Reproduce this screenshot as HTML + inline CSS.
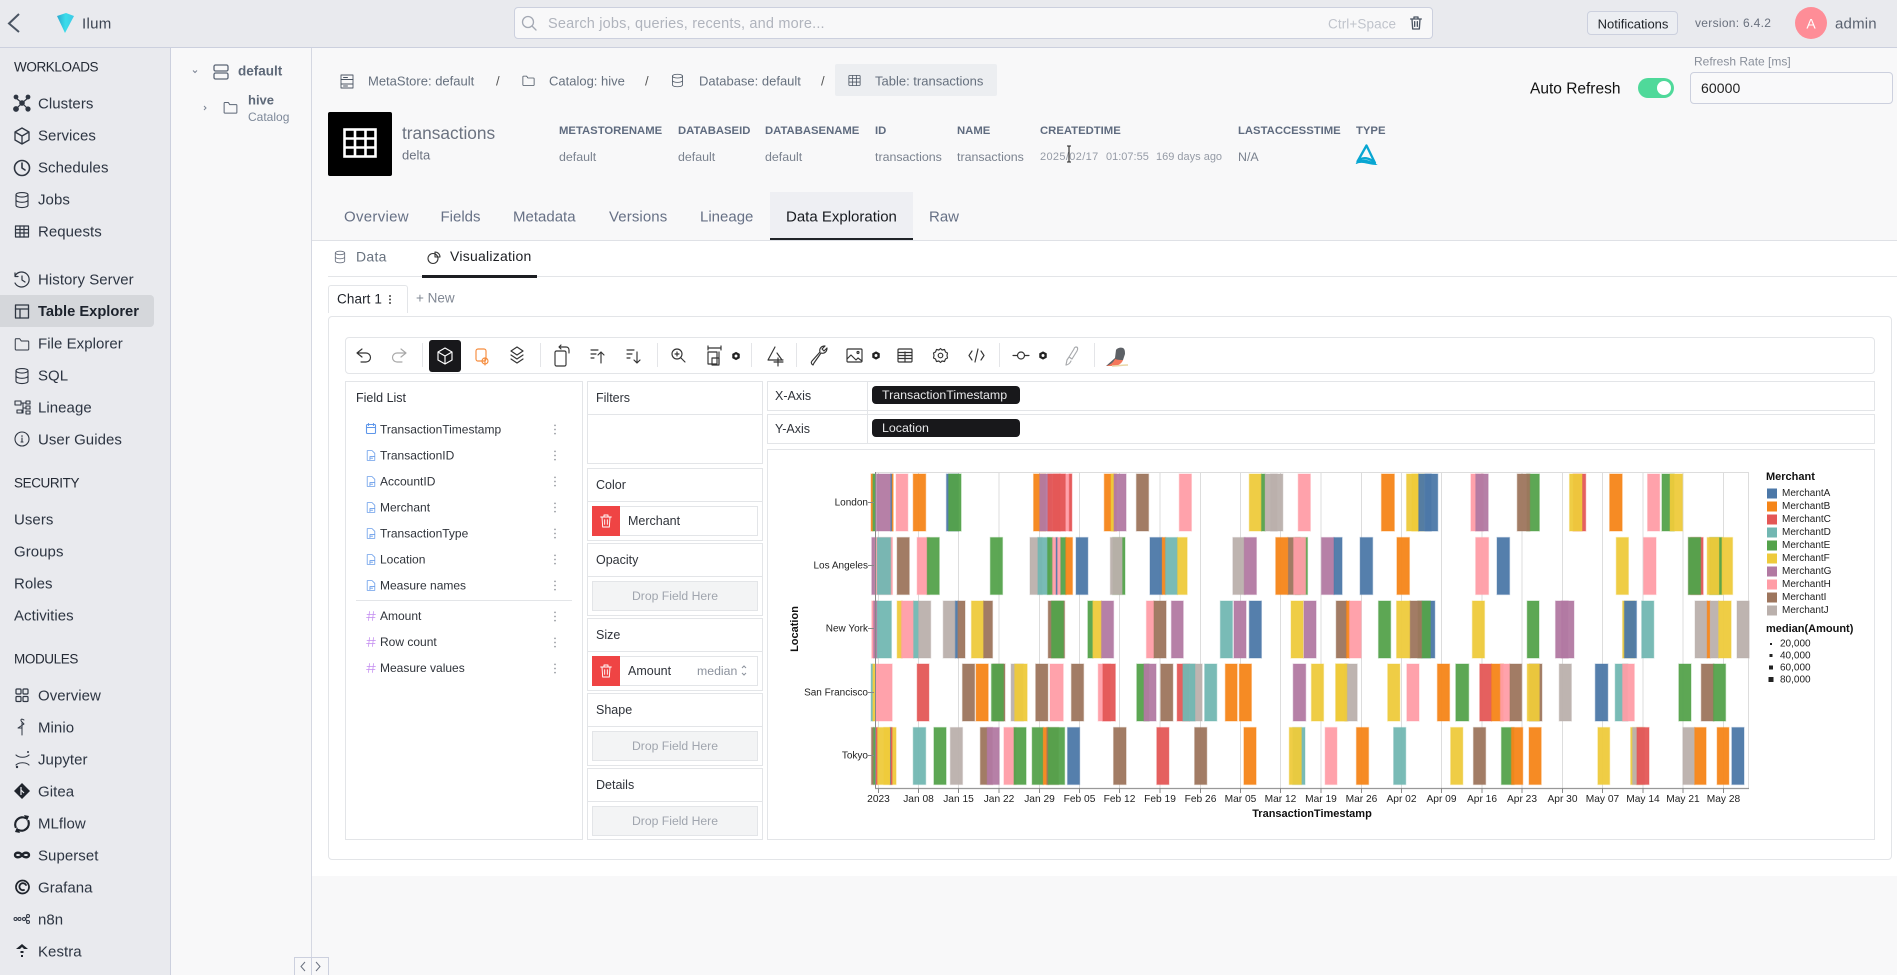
<!DOCTYPE html>
<html><head><meta charset="utf-8"><title>Ilum</title>
<style>
html,body{margin:0;padding:0;width:1897px;height:975px;overflow:hidden;background:#f8f8f9;font-family:"Liberation Sans",sans-serif}
.b{position:absolute;box-sizing:border-box}
.w{background:#fff;border:1px solid #e3e5e8}
.d{background:#f3f4f5;border:1px solid #e3e5e8}
svg.o{position:absolute;left:0;top:0}
text{dominant-baseline:central;white-space:pre}
.i{fill:none;stroke:#2f3642;stroke-width:2;stroke-linecap:round;stroke-linejoin:round}
.A{fill:#4c78a8;stroke:#4c78a8}.B{fill:#f58518;stroke:#f58518}.C{fill:#e45756;stroke:#e45756}.D{fill:#72b7b2;stroke:#72b7b2}.E{fill:#54a24b;stroke:#54a24b}.F{fill:#eeca3b;stroke:#eeca3b}.G{fill:#b279a2;stroke:#b279a2}.H{fill:#ff9da6;stroke:#ff9da6}.I{fill:#9d755d;stroke:#9d755d}.J{fill:#bab0ac;stroke:#bab0ac}
.bars rect{vector-effect:non-scaling-stroke;stroke-width:1.2;stroke-opacity:.35;fill-opacity:.95}
.r1 rect{y:474px;height:57px}.r2 rect{y:537.5px;height:57px}.r3 rect{y:601px;height:57px}.r4 rect{y:664px;height:57px}.r5 rect{y:727.5px;height:57px}
.lg rect{stroke:none}
</style></head><body>
<div class="b" style="left:0;top:0;width:1897px;height:48px;background:#e9eaee;border-bottom:1px solid #ccd0de"></div>
<div class="b" style="left:0;top:48px;width:171px;height:927px;background:#e9eaee;border-right:1px solid #ccd0de"></div>
<div class="b" style="left:171px;top:48px;width:141px;height:927px;background:#f8f8f9;border-right:1px solid #d5d8e2"></div>
<div class="b" style="left:312px;top:240px;width:1585px;height:636px;background:#fff;border-top:1px solid #dfe1e6"></div>
<div class="b" style="left:0;top:295px;width:154px;height:32px;background:#d5d7db;border-radius:0 4px 4px 0"></div>
<div class="b" style="left:514px;top:7px;width:919px;height:32px;background:#f8f8f9;border:1px solid #ccd0de;border-radius:4px"></div>
<div class="b" style="left:1587px;top:11px;width:91px;height:24px;background:#eceef2;border:1px solid #ccd0de;border-radius:4px"></div>
<div class="b" style="left:1795px;top:7px;width:32px;height:32px;background:#fe8d97;border-radius:50%"></div>
<div class="b" style="left:1638px;top:78px;width:36px;height:20px;background:#4fd99a;border-radius:10px"></div>
<div class="b" style="left:1657px;top:81px;width:14px;height:14px;background:#fff;border-radius:50%"></div>
<div class="b" style="left:1690px;top:72px;width:203px;height:32px;background:#f9f9fa;border:1px solid #ccd0de;border-radius:4px"></div>
<div class="b" style="left:835px;top:64px;width:162px;height:32px;background:#eceef1;border-radius:2px"></div>
<div class="b" style="left:328px;top:112px;width:64px;height:64px;background:#000;border-radius:2px"></div>
<div class="b" style="left:770px;top:192px;width:143px;height:48px;background:#eeeff3;border-bottom:2px solid #1f2328"></div>
<div class="b" style="left:328px;top:276px;width:1569px;height:1px;background:#e3e5e8"></div>
<div class="b" style="left:422px;top:275px;width:115px;height:3px;background:#1c1e22"></div>
<div class="b" style="left:328px;top:285px;width:80px;height:28px;background:#fff;border:1px solid #e3e5e8;border-bottom:none;border-radius:3px 3px 0 0"></div>
<div class="b w" style="left:328px;top:316px;width:1564px;height:544px;border-radius:4px"></div>
<div class="b w" style="left:345px;top:337px;width:1530px;height:37px;border-radius:4px"></div>
<div class="b" style="left:429px;top:340px;width:32px;height:32px;background:#18181b;border-radius:3px"></div>
<div class="b w" style="left:345px;top:381px;width:238px;height:459px"></div>
<div class="b w" style="left:587px;top:381px;width:176px;height:83px"></div>
<div class="b" style="left:587px;top:414px;width:176px;height:1px;background:#e3e5e8"></div>
<div class="b w" style="left:587px;top:468px;width:176px;height:73px"></div>
<div class="b" style="left:587px;top:501px;width:176px;height:1px;background:#e3e5e8"></div>
<div class="b w" style="left:592px;top:506px;width:166px;height:30px"></div>
<div class="b" style="left:592px;top:506px;width:28px;height:30px;background:#ef4444"></div>
<div class="b w" style="left:587px;top:543px;width:176px;height:73px"></div>
<div class="b" style="left:587px;top:576px;width:176px;height:1px;background:#e3e5e8"></div>
<div class="b d" style="left:592px;top:581px;width:166px;height:30px"></div>
<div class="b w" style="left:587px;top:618px;width:176px;height:73px"></div>
<div class="b" style="left:587px;top:651px;width:176px;height:1px;background:#e3e5e8"></div>
<div class="b w" style="left:592px;top:656px;width:166px;height:30px"></div>
<div class="b" style="left:592px;top:656px;width:28px;height:30px;background:#ef4444"></div>
<div class="b w" style="left:587px;top:693px;width:176px;height:73px"></div>
<div class="b" style="left:587px;top:726px;width:176px;height:1px;background:#e3e5e8"></div>
<div class="b d" style="left:592px;top:731px;width:166px;height:30px"></div>
<div class="b w" style="left:587px;top:768px;width:176px;height:72px"></div>
<div class="b" style="left:587px;top:801px;width:176px;height:1px;background:#e3e5e8"></div>
<div class="b d" style="left:592px;top:806px;width:166px;height:30px"></div>
<div class="b w" style="left:767px;top:381px;width:1108px;height:30px"></div>
<div class="b w" style="left:767px;top:414px;width:1108px;height:30px"></div>
<div class="b" style="left:867px;top:381px;width:1px;height:63px;background:#e3e5e8"></div>
<div class="b w" style="left:767px;top:449px;width:1108px;height:391px"></div>
<div class="b" style="left:872px;top:386px;width:148px;height:18px;background:#18181b;border-radius:4px"></div>
<div class="b" style="left:872px;top:419px;width:148px;height:18px;background:#18181b;border-radius:4px"></div>
<div class="b" style="left:356px;top:600px;width:216px;height:1px;background:#e3e5e8"></div>
<div class="b" style="left:294px;top:957px;width:35px;height:18px;border:1px solid #ccd0de;border-bottom:none;background:#f8f8f9"></div>
<div class="b" style="left:311px;top:957px;width:1px;height:18px;background:#ccd0de"></div>

<svg class="o" width="1897" height="975" viewBox="0 0 1897 975" xmlns="http://www.w3.org/2000/svg">
<defs>
<symbol id="db" viewBox="0 0 24 24"><ellipse cx="12" cy="5" rx="8" ry="3"/><path d="M4 5v14c0 1.7 3.6 3 8 3s8-1.3 8-3V5M4 12c0 1.7 3.6 3 8 3s8-1.3 8-3"/></symbol>
<symbol id="fo" viewBox="0 0 24 24"><path d="M3 6a1 1 0 0 1 1-1h5l2 3h9a1 1 0 0 1 1 1v10a1 1 0 0 1-1 1H4a1 1 0 0 1-1-1z"/></symbol>
<symbol id="gr" viewBox="0 0 24 24"><rect x="3" y="4" width="18" height="16" rx="1"/><path d="M3 9h18M3 14.500h18M9 4v16M15 4v16"/></symbol>
<symbol id="hx" viewBox="0 0 24 24"><path d="M12 2l9 5v10l-9 5-9-5V7z" fill="#222" stroke="none"/><circle cx="12" cy="12" r="3.500" fill="#fff" stroke="none"/></symbol>
<symbol id="tr" viewBox="0 0 24 24"><path d="M4 6h16M9 6V3h6v3M6 6l1 15h10l1-15M10 10v7M14 10v7"/></symbol>
<symbol id="dt" viewBox="0 0 4 16"><circle cx="2" cy="2" r="1.300" fill="#9a9da3"/><circle cx="2" cy="8" r="1.300" fill="#9a9da3"/><circle cx="2" cy="14" r="1.300" fill="#9a9da3"/></symbol>
<symbol id="fl" viewBox="0 0 24 24"><path d="M5 3h9l5 5v13H5zM10 20v-6h9M10 17h5"/></symbol>
<symbol id="hs" viewBox="0 0 24 24"><path d="M9 3L7 21M17 3l-2 18M4 9h17M3 15h17"/></symbol>
<linearGradient id="lg" x1="0" x2="1"><stop offset="0" stop-color="#2aa8cf"/><stop offset=".5" stop-color="#3bdcea"/><stop offset="1" stop-color="#3fc9e6"/></linearGradient>
</defs>

<!-- top bar -->
<path d="M19 14L9 23.500L19 32" fill="none" stroke="#4b5563" stroke-width="2"/>
<path d="M57 16L66 13L74 16L65 33Z" fill="url(#lg)"/>
<text x="82" y="24" font-size="15" fill="#3d4553" letter-spacing=".3">Ilum</text>
<g class="i" style="stroke:#a3a8b3;stroke-width:1.300"><circle cx="528" cy="22" r="5.500"/><path d="M532 26l4 4"/></g>
<text x="548" y="24" font-size="14.500" fill="#b0b4bd" letter-spacing=".18">Search jobs, queries, recents, and more...</text>
<text x="1328" y="24" font-size="13.500" fill="#c0c4cc" letter-spacing=".1">Ctrl+Space</text>
<use href="#tr" x="1408" y="15" width="16" height="16" class="i" style="stroke:#4b5563"/>
<text x="1633" y="24" font-size="13" fill="#1f2329" text-anchor="middle">Notifications</text>
<text x="1695" y="23" font-size="12" fill="#69707d" letter-spacing=".3">version: 6.4.2</text>
<text x="1811" y="23.500" font-size="14" fill="#fff" text-anchor="middle">A</text>
<text x="1835" y="24" font-size="15" fill="#5a6270" letter-spacing=".2">admin</text>
<text x="1530" y="89" font-size="15.500" fill="#111">Auto Refresh</text>
<text x="1694" y="61.500" font-size="12" fill="#8a909b">Refresh Rate [ms]</text>
<text x="1701" y="88" font-size="14" fill="#222" letter-spacing=".1">60000</text>

<!-- sidebar text -->
<g font-size="13.500" fill="#242a35" letter-spacing="-.4">
<text x="14" y="67">WORKLOADS</text><text x="14" y="483">SECURITY</text><text x="14" y="659">MODULES</text></g>
<g font-size="15" fill="#2d3542" letter-spacing=".05">
<text x="38" y="104">Clusters</text><text x="38" y="136">Services</text><text x="38" y="168">Schedules</text><text x="38" y="200">Jobs</text><text x="38" y="232">Requests</text>
<text x="38" y="280">History Server</text><text x="38" y="312" font-size="14.700" font-weight="bold" fill="#1c222c" letter-spacing="0">Table Explorer</text><text x="38" y="344">File Explorer</text><text x="38" y="376">SQL</text><text x="38" y="408">Lineage</text><text x="38" y="440">User Guides</text>
<text x="14" y="520">Users</text><text x="14" y="552">Groups</text><text x="14" y="584">Roles</text><text x="14" y="616">Activities</text>
<text x="38" y="696">Overview</text><text x="38" y="728">Minio</text><text x="38" y="760">Jupyter</text><text x="38" y="792">Gitea</text><text x="38" y="824">MLflow</text><text x="38" y="856">Superset</text><text x="38" y="888">Grafana</text><text x="38" y="920">n8n</text><text x="38" y="952">Kestra</text>
</g>
<!-- sidebar icons -->
<g fill="#2f3642" stroke="#2f3642" stroke-width="1.200"><path d="M22 103L16 98M22 103L28 98M22 103L16 109M22 103L28 109"/><circle cx="22" cy="103" r="2.200"/><circle cx="16" cy="97" r="1.800"/><circle cx="28" cy="97" r="1.800"/><circle cx="16" cy="109" r="2.300"/><circle cx="28" cy="109" r="2"/></g>
<g class="i" style="stroke-width:1.300"><path d="M22 128l7 4v8l-7 4-7-4v-8zM15 132l7 4 7-4M22 136v8"/></g>
<g class="i" style="stroke-width:1.600"><circle cx="22" cy="168" r="7.500"/><path d="M22 163v5l3 2"/></g>
<use href="#db" x="13" y="191" width="18" height="18" class="i" style="stroke-width:1.500"/>
<g class="i" style="stroke-width:1.200"><rect x="15.500" y="226" width="13" height="11"/><path d="M15.500 229.500h13M15.500 233h13M20 226v11M24 226v11"/></g>
<g class="i" style="stroke-width:1.200"><path d="M15 276a7.500 7.500 0 1 1 0 7M15 273v3.500h3M22 276v4l3 2"/></g>
<g class="i" style="stroke-width:1.300"><rect x="15.500" y="305" width="13" height="13"/><path d="M15.500 309h13M20 309v9"/></g>
<use href="#fo" x="13" y="335" width="18" height="18" class="i" style="stroke-width:1.300"/>
<use href="#db" x="13" y="367" width="18" height="18" class="i" style="stroke-width:1.500"/>
<g class="i" style="stroke-width:1.100"><rect x="15" y="401" width="6" height="4"/><rect x="17" y="410" width="5" height="3"/><rect x="26" y="401" width="4" height="3"/><rect x="26" y="406" width="4" height="3"/><rect x="26" y="411" width="4" height="3"/><path d="M21 403h5M23 403v10M23 408h3"/></g>
<g class="i" style="stroke-width:1.100"><circle cx="22" cy="439" r="7"/><path d="M22 438v4M21 442h2"/></g><circle cx="22" cy="436" r=".8" fill="#2f3642"/>
<g class="i" style="stroke-width:1.200"><rect x="16" y="689" width="5" height="5" rx="1"/><rect x="23" y="689" width="5" height="5" rx="1"/><rect x="16" y="696.500" width="5" height="5" rx="1"/><rect x="23" y="696.500" width="5" height="5" rx="1"/></g>
<g class="i" style="stroke-width:1"><path d="M22 735v-12M24 720c-3-2-4 0-2 2l2 2-6 4h4"/></g>
<g class="i" style="stroke-width:1.100"><path d="M16 755c3 3 10 3 13 0M16 765c3-3 10-3 13 0"/></g><circle cx="17" cy="767" r="1.200" fill="#2f3642"/><circle cx="28" cy="752" r="1" fill="#2f3642"/>
<path d="M22 783l8 8-8 8-8-8z" fill="#1f242c"/><path d="M21 787v8M21 790l3 3" stroke="#e9eaee" stroke-width="1.200" fill="none"/>
<g class="i" style="stroke:#1f242c;stroke-width:2.200"><path d="M15.600 827a7.300 7.300 0 0 1 10-9M28.400 821a7.300 7.300 0 0 1-10 9"/></g>
<path d="M24 815l5 1-2 5zM20 833l-5-1 2-5z" fill="#1f242c"/>
<g class="i" style="stroke:#1f242c;stroke-width:2.400"><path d="M22 855c-2-3-7-3-7 0s5 3 7 0c2-3 7-3 7 0s-5 3-7 0z"/></g>
<g class="i" style="stroke:#1f242c;stroke-width:1.800"><circle cx="22.500" cy="887" r="6.500" stroke-dasharray="3 1"/><path d="M26 885a3.500 3.500 0 1 0-2 5"/></g>
<g class="i" style="stroke-width:1"><circle cx="15.500" cy="919" r="1.500"/><circle cx="19.500" cy="919" r="1.500"/><circle cx="24" cy="919" r="1.500"/><circle cx="28" cy="916" r="1.500"/><circle cx="28" cy="922" r="1.500"/><path d="M25.500 919l1.500-2M25.500 919l1.500 2"/></g>
<path d="M22 944l6 5h-4l-2-2-2 2h-4zM20.500 951h3v2h-3zM21 955h2v2h-2z" fill="#1f242c"/>

<!-- tree -->
<path d="M193 70.500l2 2 2-2" stroke="#7b8494" fill="none" stroke-width="1"/>
<g class="i" style="stroke:#5b6575;stroke-width:1.300"><rect x="214" y="65" width="14" height="6" rx="1.500"/><rect x="214" y="73" width="14" height="6" rx="1.500"/></g>
<text x="238" y="71" font-size="13.500" font-weight="bold" fill="#5d6878">default</text>
<path d="M204 106l2 2-2 2" stroke="#7b8494" fill="none" stroke-width="1"/>
<use href="#fo" x="222" y="99" width="17" height="17" class="i" style="stroke:#5b6575;stroke-width:1.400"/>
<text x="248" y="100" font-size="13" font-weight="bold" fill="#5d6878">hive</text>
<text x="248" y="117" font-size="12" fill="#7d8899">Catalog</text>
<g class="i" style="stroke:#4b5563;stroke-width:.9"><rect x="341" y="75" width="12" height="13"/><path d="M341 79.500h12M341 84h12M343.500 77.500h4M343.500 86h4"/></g>

<!-- breadcrumb -->
<g font-size="13" fill="#66707e">
<text x="368" y="81">MetaStore: default</text><text x="496" y="81" fill="#555">/</text>
<text x="549" y="81">Catalog: hive</text><text x="645" y="81" fill="#555">/</text>
<text x="699" y="81">Database: default</text><text x="821" y="81" fill="#555">/</text>
<text x="875" y="81">Table: transactions</text></g>
<use href="#fo" x="521" y="73" width="15" height="15" class="i" style="stroke:#4b5563;stroke-width:1.300"/>
<use href="#db" x="670" y="73" width="15" height="15" class="i" style="stroke:#4b5563;stroke-width:1.300"/>
<use href="#gr" x="847" y="73" width="15" height="15" class="i" style="stroke:#4b5563;stroke-width:1.300"/>

<!-- header meta -->
<g stroke="#fff" stroke-width="2.600" fill="none"><rect x="344.500" y="129.500" width="31" height="27"/><path d="M344 138.500h32M344 147.500h32M355 129v28M365.500 129v28"/></g>
<text x="402" y="133" font-size="17.300" fill="#6b7280">transactions</text>
<text x="402" y="155" font-size="13" fill="#6b7280">delta</text>
<g font-size="11.300" font-weight="bold" fill="#5f6b7f">
<text x="559" y="131">METASTORENAME</text><text x="678" y="131">DATABASEID</text><text x="765" y="131">DATABASENAME</text><text x="875" y="131">ID</text><text x="957" y="131">NAME</text><text x="1040" y="131">CREATEDTIME</text><text x="1238" y="131">LASTACCESSTIME</text><text x="1356" y="131">TYPE</text></g>
<g font-size="12.400" fill="#7a828f">
<text x="559" y="157">default</text><text x="678" y="157">default</text><text x="765" y="157">default</text><text x="875" y="157">transactions</text><text x="957" y="157">transactions</text><text x="1238" y="157">N/A</text></g>
<g font-size="11" fill="#959ba6"><text x="1040" y="157" letter-spacing=".35">2025/02/17</text><text x="1106" y="157">01:07:55</text><text x="1156" y="157">169 days ago</text></g>
<path d="M1366.500 145.500L1375 163C1370 158 1363 156 1357.500 161.500Z" fill="none" stroke="#08a6d2" stroke-width="2.300" stroke-linejoin="round"/>
<path d="M1356 163.500C1361 158.500 1368 159.500 1376 164.500C1369 164.500 1362 160.500 1356 163.500Z" fill="#08a6d2" stroke="#08a6d2" stroke-width="1"/>
<path d="M1067 146h4M1069 146v16M1067 162h4" stroke="#222" stroke-width="1.100" fill="none"/>

<!-- tabs -->
<g font-size="15" fill="#667085" style="-webkit-text-stroke:.35px #667085">
<text x="344" y="217" letter-spacing=".3">Overview</text><text x="440.500" y="217">Fields</text><text x="513" y="217">Metadata</text><text x="609" y="217" letter-spacing=".1">Versions</text><text x="700" y="217">Lineage</text><text x="929" y="217">Raw</text></g>
<text x="786" y="217" font-size="15" fill="#171a1f" style="-webkit-text-stroke:.45px #171a1f">Data Exploration</text>
<use href="#db" x="333" y="250" width="14" height="14" class="i" style="stroke:#6b7280;stroke-width:1.500"/>
<text x="356" y="256.500" font-size="14" fill="#68727f" letter-spacing=".3">Data</text>
<g class="i" style="stroke:#333;stroke-width:1.100"><circle cx="433" cy="258.500" r="5"/><path d="M435 252v5h5a5 5 0 0 0-5-5z"/></g>
<text x="450" y="256" font-size="14" fill="#1c1e22" letter-spacing=".25">Visualization</text>
<text x="337" y="299" font-size="13.500" fill="#20242b" letter-spacing=".1">Chart 1</text>
<g fill="#444"><circle cx="390" cy="296" r="1"/><circle cx="390" cy="299.500" r="1"/><circle cx="390" cy="303" r="1"/></g>
<text x="416" y="298" font-size="13.500" fill="#818894">+ New</text>

<!-- toolbar -->
<g class="i" style="stroke:#333;stroke-width:1.150">
<path d="M362 349l-5 4 5 4M357 353h9a4.500 4.500 0 0 1 0 9h-5"/>
<g style="stroke:#a8a8a8"><path d="M401 349l5 4-5 4M406 353h-9a4.500 4.500 0 0 0 0 9h5"/></g>
<g style="stroke:#fff"><path d="M445 348l7 4v8l-7 4-7-4v-8zM438 352l7 4 7-4M445 356v8"/></g>
<g style="stroke:#f58c3d"><rect x="476" y="349" width="10" height="12" rx="2"/><circle cx="485" cy="361" r="3"/><path d="M485 358v7"/></g>
<path d="M517 347l6 4-6 4-6-4zM511 355l6 4 6-4M511 359l6 4 6-4"/>
<rect x="555" y="351" width="11" height="15" rx="1.500"/><path d="M559 347h7c2 0 3 1.500 3 3v3M561 345l-2 2 2 2"/>
<path d="M591 350h7M591 354h5M591 358h3M601 363v-11M598 355l3-3 3 3"/>
<path d="M627 350h7M627 354h5M627 358h3M637 352v11M634 360l3 3 3-3"/>
<circle cx="677" cy="354" r="5"/><path d="M681 358l4 4M675 354h4M677 352v4"/>
<path d="M708 348h13M708 346v4M721 346v4M708 352h9v12h-9zM719 352v12"/><rect x="712" y="358" width="7" height="7"/>
<path d="M775 347l-7 13h15M777 353l5 7" /><path d="M778 358v8M774 362h9"/>
<path d="M813 365c-2-1-2-3-1-4l8-9c-1-3 1-6 5-6l-3 3 2 2 3-3c0 4-3 6-6 5l-7 10c-.5 1-1 2-1 2z"/>
<rect x="847" y="349" width="15" height="13" rx="1"/><path d="M847 359l4-4 5 5 2-2 4 3"/><circle cx="858" cy="352.500" r="1"/>
<rect x="898" y="349" width="14" height="13" rx="1"/><path d="M898 352.500h14M898 355.500h14M898 358.500h14M905 352v10"/>
<circle cx="940.500" cy="355.500" r="2.300"/><path d="M940.500 348.500l1.500 1.500 2.500-.5 1 2.500 2 1-.5 2.500.5 2.500-2 1-1 2.500-2.500-.5-1.500 1.500-1.500-1.500-2.500.5-1-2.500-2-1 .5-2.500-.5-2.500 2-1 1-2.500 2.500.5z"/>
<path d="M972 351l-3 4.500 3 4.500M981 351l3 4.500-3 4.500M978 349l-3 13"/>
<circle cx="1021" cy="355.500" r="3.500"/><path d="M1013 355.500h4.500M1024.500 355.500h4.500"/>
<g style="stroke:#a8aaad"><path d="M1076 347c2 0 2 2 1 4l-5 8-3-2 5-8c0-1 1-2 2-2zM1069 357l-2 3-1 5c2 0 4-2 5-4"/></g>
</g>
<g stroke="#e4e5e8" stroke-width="1"><path d="M422.500 343v24M540.500 343v24M657.500 343v24M751.500 343v24M796.500 343v24M999.500 343v24M1094.500 343v24"/></g>
<use href="#hx" x="731" y="351" width="10" height="10"/><use href="#hx" x="871" y="350.500" width="10" height="10"/><use href="#hx" x="1038" y="350.500" width="10" height="10"/>
<path d="M1106 366l9-8 1-8c1-2 5-3 7-2 2 1 2 4 2 6l-2 6-6 5z" fill="#5d6166"/><path d="M1106 366c4-1 7-3 9-7 3 1 6 1 8 1-1 3-4 5-7 6z" fill="#f4775a"/><path d="M1112 366c5 0 11-1 16-1" stroke="#e8d6a6" stroke-width="1.400" fill="none"/>

<!-- field list -->
<text x="356" y="398" font-size="12.500" fill="#2a2e35">Field List</text>
<g font-size="12" fill="#2f333a">
<text x="380" y="429.500">TransactionTimestamp</text><text x="380" y="455.500">TransactionID</text><text x="380" y="481.500">AccountID</text><text x="380" y="507.500">Merchant</text><text x="380" y="533.500">TransactionType</text><text x="380" y="559.500">Location</text><text x="380" y="585.500">Measure names</text><text x="380" y="616">Amount</text><text x="380" y="642">Row count</text><text x="380" y="668">Measure values</text></g>
<g class="i" style="stroke:#5f97ea;stroke-width:1.100"><rect x="366.500" y="424.500" width="9" height="9" rx="1"/><path d="M366.500 427.500h9M368.500 423.500v2M373.500 423.500v2"/></g>
<g class="i" style="stroke:#6b9eea;stroke-width:1.500"><use href="#fl" x="364.500" y="448.500" width="13" height="14"/><use href="#fl" x="364.500" y="474.500" width="13" height="14"/><use href="#fl" x="364.500" y="500.500" width="13" height="14"/><use href="#fl" x="364.500" y="526.500" width="13" height="14"/><use href="#fl" x="364.500" y="552.500" width="13" height="14"/><use href="#fl" x="364.500" y="578.500" width="13" height="14"/></g>
<g class="i" style="stroke:#c28bf0;stroke-width:1.500"><use href="#hs" x="365" y="610" width="12" height="12"/><use href="#hs" x="365" y="636" width="12" height="12"/><use href="#hs" x="365" y="662" width="12" height="12"/></g>
<use href="#dt" x="553" y="424" width="4" height="11"/><use href="#dt" x="553" y="450" width="4" height="11"/><use href="#dt" x="553" y="476" width="4" height="11"/><use href="#dt" x="553" y="502" width="4" height="11"/><use href="#dt" x="553" y="528" width="4" height="11"/><use href="#dt" x="553" y="554" width="4" height="11"/><use href="#dt" x="553" y="580" width="4" height="11"/><use href="#dt" x="553" y="611" width="4" height="11"/><use href="#dt" x="553" y="637" width="4" height="11"/><use href="#dt" x="553" y="663" width="4" height="11"/>

<!-- mid shelves -->
<g font-size="12.500" fill="#2f333a">
<text x="596" y="398">Filters</text><text x="596" y="485">Color</text><text x="596" y="560">Opacity</text><text x="596" y="635">Size</text><text x="596" y="710">Shape</text><text x="596" y="785">Details</text>
<text x="628" y="521">Merchant</text><text x="628" y="671">Amount</text></g>
<text x="697" y="671" font-size="12.300" fill="#8b919c">median</text>
<path d="M742 668l2-2 2 2M742 673l2 2 2-2" stroke="#8b919c" fill="none"/>
<g font-size="12.200" fill="#a0a5ae" text-anchor="middle"><text x="675" y="596">Drop Field Here</text><text x="675" y="746">Drop Field Here</text><text x="675" y="821">Drop Field Here</text></g>
<g class="i" style="stroke:#fff;stroke-width:1.400"><use href="#tr" x="598" y="513" width="16" height="16"/><use href="#tr" x="598" y="663" width="16" height="16"/></g>

<!-- axis shelves -->
<g font-size="12.500" fill="#2f333a"><text x="775" y="396">X-Axis</text><text x="775" y="429">Y-Axis</text></g>
<g font-size="12.400" fill="#e8e8ea"><text x="882" y="395">TransactionTimestamp</text><text x="882" y="428">Location</text></g>

<!-- chart grid -->
<g stroke="#ddd" stroke-width="1"><path d="M878.500 472v316M918.500 472v316M958.500 472v316M999 472v316M1039.500 472v316M1079.500 472v316M1119.500 472v316M1160 472v316M1200.500 472v316M1240.500 472v316M1280.500 472v316M1321 472v316M1361.500 472v316M1401.500 472v316M1441.500 472v316M1482 472v316M1522 472v316M1562.500 472v316M1602.500 472v316M1643 472v316M1683 472v316M1723.500 472v316M876 472.500h873M1748.500 472v316"/></g>

<g class="bars" transform="translate(770 0) scale(.35714 1)">
<g class="r1"><rect class="B" x="283" width="5"/><rect class="E" x="288" width="8"/><rect class="G" x="298" width="40"/><rect class="A" x="338" width="4"/><rect class="B" x="342" width="3"/><rect class="H" x="353" width="33"/><rect class="B" x="401" width="35"/><rect class="A" x="494" width="34"/><rect class="E" x="500" width="35"/><rect class="B" x="738" width="34"/><rect class="G" x="755" width="34"/><rect class="H" x="811" width="34"/><rect class="C" x="838" width="7"/><rect class="C" x="778" width="34"/><rect class="C" x="793" width="34"/><rect class="B" x="936" width="34"/><rect class="F" x="955" width="10"/><rect class="G" x="963" width="34"/><rect class="I" x="1026" width="34"/><rect class="H" x="1146" width="34"/><rect class="F" x="1342" width="34"/><rect class="E" x="1376" width="10"/><rect class="J" x="1386" width="34"/><rect class="J" x="1402" width="34"/><rect class="H" x="1479" width="34"/></g>
<g class="r2"><rect class="G" x="285" width="10"/><rect class="H" x="295" width="48"/><rect class="D" x="300" width="38"/><rect class="I" x="356" width="34"/><rect class="H" x="412" width="34"/><rect class="E" x="440" width="34"/><rect class="E" x="617" width="34"/><rect class="J" x="728" width="34"/><rect class="D" x="750" width="34"/><rect class="E" x="777" width="15"/><rect class="H" x="791" width="24"/><rect class="A" x="801" width="3"/><rect class="E" x="814" width="15"/><rect class="B" x="828" width="19"/><rect class="A" x="857" width="33"/><rect class="E" x="960" width="34"/><rect class="J" x="953" width="33"/><rect class="A" x="1064" width="34"/><rect class="B" x="1098" width="10"/><rect class="D" x="1107" width="34"/><rect class="F" x="1141" width="27"/><rect class="J" x="1296" width="34"/><rect class="G" x="1328" width="34"/><rect class="E" x="1471" width="34"/><rect class="I" x="1450" width="34"/><rect class="B" x="1416" width="34"/><rect class="H" x="1466" width="34"/></g>
<g class="r3"><rect class="H" x="285" width="15"/><rect class="G" x="290" width="10"/><rect class="D" x="300" width="40"/><rect class="F" x="356" width="14"/><rect class="H" x="368" width="34"/><rect class="D" x="402" width="14"/><rect class="J" x="416" width="34"/><rect class="J" x="485" width="34"/><rect class="A" x="519" width="7"/><rect class="I" x="526" width="20"/><rect class="F" x="564" width="34"/><rect class="I" x="598" width="25"/><rect class="I" x="779" width="46"/><rect class="E" x="788" width="34"/><rect class="E" x="890" width="14"/><rect class="F" x="904" width="24"/><rect class="G" x="928" width="34"/><rect class="H" x="1054" width="21"/><rect class="I" x="1075" width="34"/><rect class="G" x="1124" width="33"/><rect class="D" x="1261" width="34"/><rect class="G" x="1299" width="34"/><rect class="A" x="1342" width="34"/><rect class="F" x="1459" width="34"/><rect class="G" x="1495" width="34"/></g>
<g class="r4"><rect class="D" x="283" width="5"/><rect class="F" x="288" width="8"/><rect class="H" x="296" width="46"/><rect class="C" x="412" width="33"/><rect class="I" x="539" width="34"/><rect class="B" x="577" width="34"/><rect class="I" x="624" width="34"/><rect class="E" x="620" width="34"/><rect class="J" x="675" width="34"/><rect class="F" x="685" width="35"/><rect class="I" x="744" width="34"/><rect class="H" x="784" width="37"/><rect class="I" x="844" width="34"/><rect class="H" x="919" width="34"/><rect class="C" x="932" width="35"/><rect class="E" x="1027" width="34"/><rect class="G" x="1047" width="34"/><rect class="I" x="1094" width="34"/><rect class="C" x="1140" width="34"/><rect class="J" x="1176" width="34"/><rect class="D" x="1156" width="34"/><rect class="D" x="1217" width="34"/><rect class="B" x="1275" width="33"/><rect class="B" x="1314" width="34"/><rect class="G" x="1465" width="35"/><rect class="F" x="1516" width="34"/></g>
<g class="r5"><rect class="I" x="284" width="6"/><rect class="E" x="290" width="6"/><rect class="C" x="296" width="5"/><rect class="F" x="319" width="34"/><rect class="A" x="336" width="3"/><rect class="C" x="339" width="3"/><rect class="F" x="301" width="35"/><rect class="D" x="401" width="35"/><rect class="E" x="459" width="34"/><rect class="J" x="505" width="34"/><rect class="I" x="589" width="34"/><rect class="G" x="608" width="34"/><rect class="H" x="655" width="34"/><rect class="E" x="683" width="34"/><rect class="E" x="734" width="31"/><rect class="B" x="765" width="14"/><rect class="I" x="775" width="33"/><rect class="E" x="779" width="46"/><rect class="A" x="833" width="34"/><rect class="I" x="962" width="35"/><rect class="C" x="1083" width="34"/><rect class="I" x="1189" width="34"/><rect class="B" x="1327" width="34"/><rect class="D" x="1464" width="34"/><rect class="F" x="1454" width="34"/></g>
</g>
<g class="bars" transform="translate(1320 0) scale(.36805 1)">
<g class="r1"><rect class="B" x="167" width="35"/><rect class="F" x="235" width="33"/><rect class="F" x="250" width="33"/><rect class="A" x="268" width="34"/><rect class="A" x="286" width="34"/><rect class="H" x="410" width="34"/><rect class="G" x="423" width="34"/><rect class="E" x="562" width="34"/><rect class="I" x="536" width="34"/><rect class="C" x="688" width="34"/><rect class="F" x="678" width="34"/><rect class="B" x="787" width="34"/><rect class="H" x="890" width="33"/><rect class="E" x="929" width="33"/><rect class="F" x="951" width="34"/></g>
<g class="r2"><rect class="G" x="4" width="34"/><rect class="A" x="38" width="22"/><rect class="A" x="109" width="34"/><rect class="B" x="209" width="34"/><rect class="H" x="423" width="35"/><rect class="A" x="481" width="34"/><rect class="F" x="805" width="33"/><rect class="H" x="879" width="34"/><rect class="C" x="1008" width="33"/><rect class="I" x="1001" width="33"/><rect class="E" x="1001" width="33"/><rect class="F" x="1060" width="33"/><rect class="E" x="1059" width="33"/><rect class="F" x="1052" width="32"/><rect class="F" x="1092" width="29"/></g>
<g class="r3"><rect class="I" x="44" width="28"/><rect class="B" x="72" width="8"/><rect class="H" x="80" width="32"/><rect class="E" x="159" width="33"/><rect class="F" x="208" width="37"/><rect class="A" x="278" width="34"/><rect class="E" x="266" width="34"/><rect class="I" x="245" width="31"/><rect class="F" x="414" width="33"/><rect class="E" x="563" width="32"/><rect class="G" x="640" width="34"/><rect class="G" x="656" width="34"/><rect class="F" x="822" width="33"/><rect class="A" x="827" width="33"/><rect class="D" x="874" width="33"/><rect class="J" x="1019" width="34"/><rect class="B" x="1052" width="8"/><rect class="J" x="1060" width="23"/><rect class="F" x="1083" width="34"/><rect class="J" x="1133" width="33"/></g>
<g class="r4"><rect class="F" x="43" width="33"/><rect class="J" x="68" width="33"/><rect class="F" x="43" width="30"/><rect class="F" x="184" width="33"/><rect class="H" x="236" width="33"/><rect class="B" x="319" width="33"/><rect class="E" x="369" width="35"/><rect class="C" x="434" width="32"/><rect class="B" x="466" width="32"/><rect class="H" x="490" width="26"/><rect class="I" x="516" width="32"/><rect class="I" x="569" width="34"/><rect class="F" x="563" width="33"/><rect class="J" x="650" width="33"/><rect class="A" x="748" width="34"/><rect class="D" x="802" width="34"/><rect class="H" x="822" width="32"/><rect class="E" x="975" width="33"/><rect class="I" x="1036" width="34"/><rect class="E" x="1069" width="33"/></g>
<g class="r5"><rect class="H" x="14" width="32"/><rect class="B" x="99" width="33"/><rect class="D" x="200" width="33"/><rect class="F" x="355" width="33"/><rect class="I" x="417" width="33"/><rect class="E" x="493" width="34"/><rect class="B" x="520" width="31"/><rect class="B" x="568" width="33"/><rect class="F" x="755" width="32"/><rect class="F" x="844" width="33"/><rect class="J" x="849" width="33"/><rect class="C" x="861" width="33"/><rect class="J" x="986" width="32"/><rect class="B" x="1018" width="31"/><rect class="B" x="1079" width="32"/><rect class="A" x="1119" width="33"/></g>
</g>

<!-- axes -->
<path d="M875.500 472v316" stroke="#888" stroke-width="1" fill="none"/>
<path d="M875 788.500h874" stroke="#999" stroke-width="1.200" fill="none"/>
<g stroke="#888" stroke-width="1"><path d="M868 502.500h6M868 565.500h6M868 628.500h6M868 692.500h6M868 755.500h6M878.500 788v5M918.500 788v5M958.500 788v5M999 788v5M1039.500 788v5M1079.500 788v5M1119.500 788v5M1160 788v5M1200.500 788v5M1240.500 788v5M1280.500 788v5M1321 788v5M1361.500 788v5M1401.500 788v5M1441.500 788v5M1482 788v5M1522 788v5M1562.500 788v5M1602.500 788v5M1643 788v5M1683 788v5M1723.500 788v5"/></g>
<g font-size="10" fill="#222" text-anchor="end"><text x="868" y="503">London</text><text x="868" y="566">Los Angeles</text><text x="868" y="629">New York</text><text x="868" y="693">San Francisco</text><text x="868" y="756">Tokyo</text></g>
<text font-size="11" font-weight="bold" fill="#111" text-anchor="middle" transform="translate(795 629) rotate(-90)">Location</text>
<g font-size="10.200" fill="#222" text-anchor="middle">
<text x="878.500" y="799.500">2023</text><text x="918.500" y="799.500">Jan 08</text><text x="958.500" y="799.500">Jan 15</text><text x="999" y="799.500">Jan 22</text><text x="1039.500" y="799.500">Jan 29</text><text x="1079.500" y="799.500">Feb 05</text><text x="1119.500" y="799.500">Feb 12</text><text x="1160" y="799.500">Feb 19</text><text x="1200.500" y="799.500">Feb 26</text><text x="1240.500" y="799.500">Mar 05</text><text x="1280.500" y="799.500">Mar 12</text><text x="1321" y="799.500">Mar 19</text><text x="1361.500" y="799.500">Mar 26</text><text x="1401.500" y="799.500">Apr 02</text><text x="1441.500" y="799.500">Apr 09</text><text x="1482" y="799.500">Apr 16</text><text x="1522" y="799.500">Apr 23</text><text x="1562.500" y="799.500">Apr 30</text><text x="1602.500" y="799.500">May 07</text><text x="1643" y="799.500">May 14</text><text x="1683" y="799.500">May 21</text><text x="1723.500" y="799.500">May 28</text></g>
<text x="1312" y="814" font-size="11" font-weight="bold" fill="#111" text-anchor="middle">TransactionTimestamp</text>

<!-- legend -->
<text x="1766" y="477" font-size="11" font-weight="bold" fill="#111">Merchant</text>
<g class="lg"><rect class="A" x="1767" y="488.500" width="10" height="10"/><rect class="B" x="1767" y="501.500" width="10" height="10"/><rect class="C" x="1767" y="514.500" width="10" height="10"/><rect class="D" x="1767" y="527.500" width="10" height="10"/><rect class="E" x="1767" y="540.500" width="10" height="10"/><rect class="F" x="1767" y="553.500" width="10" height="10"/><rect class="G" x="1767" y="566.500" width="10" height="10"/><rect class="H" x="1767" y="579.500" width="10" height="10"/><rect class="I" x="1767" y="592.500" width="10" height="10"/><rect class="J" x="1767" y="605.500" width="10" height="10"/></g>
<g font-size="10" fill="#222"><text x="1782" y="493.500">MerchantA</text><text x="1782" y="506.500">MerchantB</text><text x="1782" y="519.500">MerchantC</text><text x="1782" y="532.500">MerchantD</text><text x="1782" y="545.500">MerchantE</text><text x="1782" y="558.500">MerchantF</text><text x="1782" y="571.500">MerchantG</text><text x="1782" y="584.500">MerchantH</text><text x="1782" y="597.500">MerchantI</text><text x="1782" y="610.500">MerchantJ</text>
<text x="1780" y="644">20,000</text><text x="1780" y="656">40,000</text><text x="1780" y="668">60,000</text><text x="1780" y="680">80,000</text></g>
<text x="1766" y="629" font-size="11" font-weight="bold" fill="#111">median(Amount)</text>
<g fill="#222"><rect x="1770" y="643" width="2" height="2"/><rect x="1769.500" y="654" width="3" height="3"/><rect x="1769" y="665.500" width="4" height="4"/><rect x="1768.500" y="677" width="5" height="5"/></g>

<!-- bottom arrows -->
<path d="M305 962l-4 4.500 4 4.500M316 962l4 4.500-4 4.500" fill="none" stroke="#6b7280" stroke-width="1"/>
</svg>
</body></html>
